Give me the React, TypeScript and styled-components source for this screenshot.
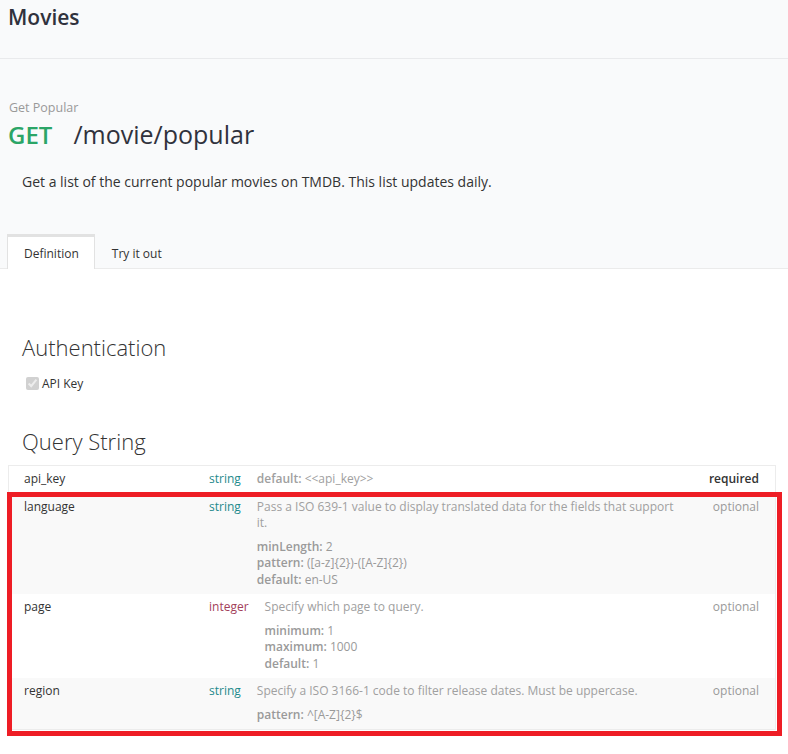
import React from "react";
import styled, { createGlobalStyle } from "styled-components";

const Global = createGlobalStyle`
  html, body { margin: 0; padding: 0; background: #ffffff; }
  body { font-family: "Open Sans", "Noto Sans", sans-serif; color: #333; }
  * { box-sizing: border-box; }
`;

const Page = styled.div`
  position: relative;
  width: 788px;
  min-height: 754px;
  background: #fff;
`;

const Header = styled.header`
  height: 59px;
  padding: 2px 8px 0;
  background: #f9fafb;
  border-bottom: 1px solid #e9eaec;
`;

const Title = styled.h1`
  margin: 0;
  font-size: 21px;
  line-height: 30px;
  font-weight: 600;
  color: #30323d;
`;

const Intro = styled.section`
  background: #f9fafb;
  padding: 40px 0 0;
  border-bottom: 1px solid #ebebeb;
`;

const Summary = styled.div`
  padding-left: 9px;
  font-size: 12.5px;
  line-height: 18px;
  color: #999;
`;

const EndpointLine = styled.div`
  display: flex;
  align-items: baseline;
  gap: 21px;
  padding-left: 8px;
  margin-top: 1px;
  line-height: 32px;
`;

const Method = styled.span`
  font-size: 24px;
  font-weight: 600;
  color: #2ba567;
`;

const Path = styled.span`
  font-size: 25px;
  color: #30323d;
`;

const Description = styled.p`
  margin: 21px 0 0;
  padding-left: 22px;
  font-size: 14px;
  line-height: 20px;
  color: #333;
`;

const Tabs = styled.div`
  display: flex;
  margin-top: 42px;
  padding-left: 7px;
  margin-bottom: -1px;
`;

const Tab = styled.div<{ $active?: boolean }>`
  padding: 0 15px 0 16px;
  height: 35px;
  display: flex;
  align-items: center;
  font-size: 12px;
  color: #333;
  background: ${(p) => (p.$active ? "#fff" : "transparent")};
  border: 1px solid ${(p) => (p.$active ? "#e2e2e2" : "transparent")};
  border-top-width: 3px;
  border-bottom: none;
`;

const Body = styled.main`
  padding-top: 63px;
`;

const SectionTitle = styled.h2<{ $top?: number }>`
  margin: ${(p) => p.$top ?? 0}px 0 0;
  padding-left: 22px;
  font-size: 22px;
  line-height: 30px;
  font-weight: 300;
  color: #333;
`;

const AuthItem = styled.label`
  display: flex;
  align-items: center;
  gap: 3px;
  padding-left: 26px;
  margin-top: 13px;
  font-size: 12px;
  line-height: 17px;
  color: #333;
  input {
    margin: 0;
    width: 13px;
    height: 13px;
  }
`;

const Table = styled.div`
  margin: 9px 12px 0 8px;
  border: 1px solid #ececec;
`;

const Row = styled.div<{ $shade?: boolean }>`
  display: flex;
  align-items: flex-start;
  padding: 5px 16px 6px 15px;
  background: ${(p) => (p.$shade ? "#f9f9f9" : "#fff")};
  font-size: 12px;
  line-height: 16.5px;
`;

const Name = styled.div`
  width: 185px;
  flex-shrink: 0;
  color: #333;
`;

const Type = styled.div<{ $kind: string }>`
  flex-shrink: 0;
  margin-right: 16px;
  color: ${(p) => (p.$kind === "integer" ? "#a2405a" : "#1f8a8c")};
`;

const Desc = styled.div`
  flex: 1;
  min-width: 0;
  padding-right: 22px;
  color: #a0a0a0;
  b {
    font-weight: 600;
  }
`;

const Meta = styled.div`
  margin-top: 7px;
  color: #9a9a9a;
`;

const Req = styled.div<{ $required?: boolean }>`
  width: 60px;
  flex-shrink: 0;
  text-align: right;
  color: ${(p) => (p.$required ? "#333" : "#999")};
  font-weight: ${(p) => (p.$required ? 600 : 400)};
`;

const Annotation = styled.div`
  position: absolute;
  left: 7px;
  top: 492px;
  width: 775px;
  height: 244px;
  border: 5px solid #ee1d25;
  pointer-events: none;
`;

type Param = {
  name: string;
  type: string;
  desc: React.ReactNode;
  meta: [string, string][];
  required?: boolean;
};

const params: Param[] = [
  {
    name: "api_key",
    type: "string",
    desc: (
      <>
        <b>default:</b> &lt;&lt;api_key&gt;&gt;
      </>
    ),
    meta: [],
    required: true,
  },
  {
    name: "language",
    type: "string",
    desc: "Pass a ISO 639-1 value to display translated data for the fields that support it.",
    meta: [
      ["minLength", "2"],
      ["pattern", "([a-z]{2})-([A-Z]{2})"],
      ["default", "en-US"],
    ],
  },
  {
    name: "page",
    type: "integer",
    desc: "Specify which page to query.",
    meta: [
      ["minimum", "1"],
      ["maximum", "1000"],
      ["default", "1"],
    ],
  },
  {
    name: "region",
    type: "string",
    desc: "Specify a ISO 3166-1 code to filter release dates. Must be uppercase.",
    meta: [["pattern", "^[A-Z]{2}$"]],
  },
];

export default function App() {
  return (
    <Page>
      <Global />
      <Header>
        <Title>Movies</Title>
      </Header>
      <Intro>
        <Summary>Get Popular</Summary>
        <EndpointLine>
          <Method>GET</Method>
          <Path>/movie/popular</Path>
        </EndpointLine>
        <Description>
          Get a list of the current popular movies on TMDB. This list updates daily.
        </Description>
        <Tabs>
          <Tab $active>Definition</Tab>
          <Tab>Try it out</Tab>
        </Tabs>
      </Intro>
      <Body>
        <SectionTitle>Authentication</SectionTitle>
        <AuthItem>
          <input type="checkbox" checked disabled readOnly />
          API Key
        </AuthItem>
        <SectionTitle $top={34}>Query String</SectionTitle>
        <Table>
          {params.map((p, i) => (
            <Row key={p.name} $shade={i % 2 === 1}>
              <Name>{p.name}</Name>
              <Type $kind={p.type}>{p.type}</Type>
              <Desc>
                <div>{p.desc}</div>
                {p.meta.length > 0 && (
                  <Meta>
                    {p.meta.map(([k, v]) => (
                      <div key={k}>
                        <b>{k}:</b> {v}
                      </div>
                    ))}
                  </Meta>
                )}
              </Desc>
              <Req $required={p.required}>{p.required ? "required" : "optional"}</Req>
            </Row>
          ))}
        </Table>
      </Body>
      <Annotation />
    </Page>
  );
}
